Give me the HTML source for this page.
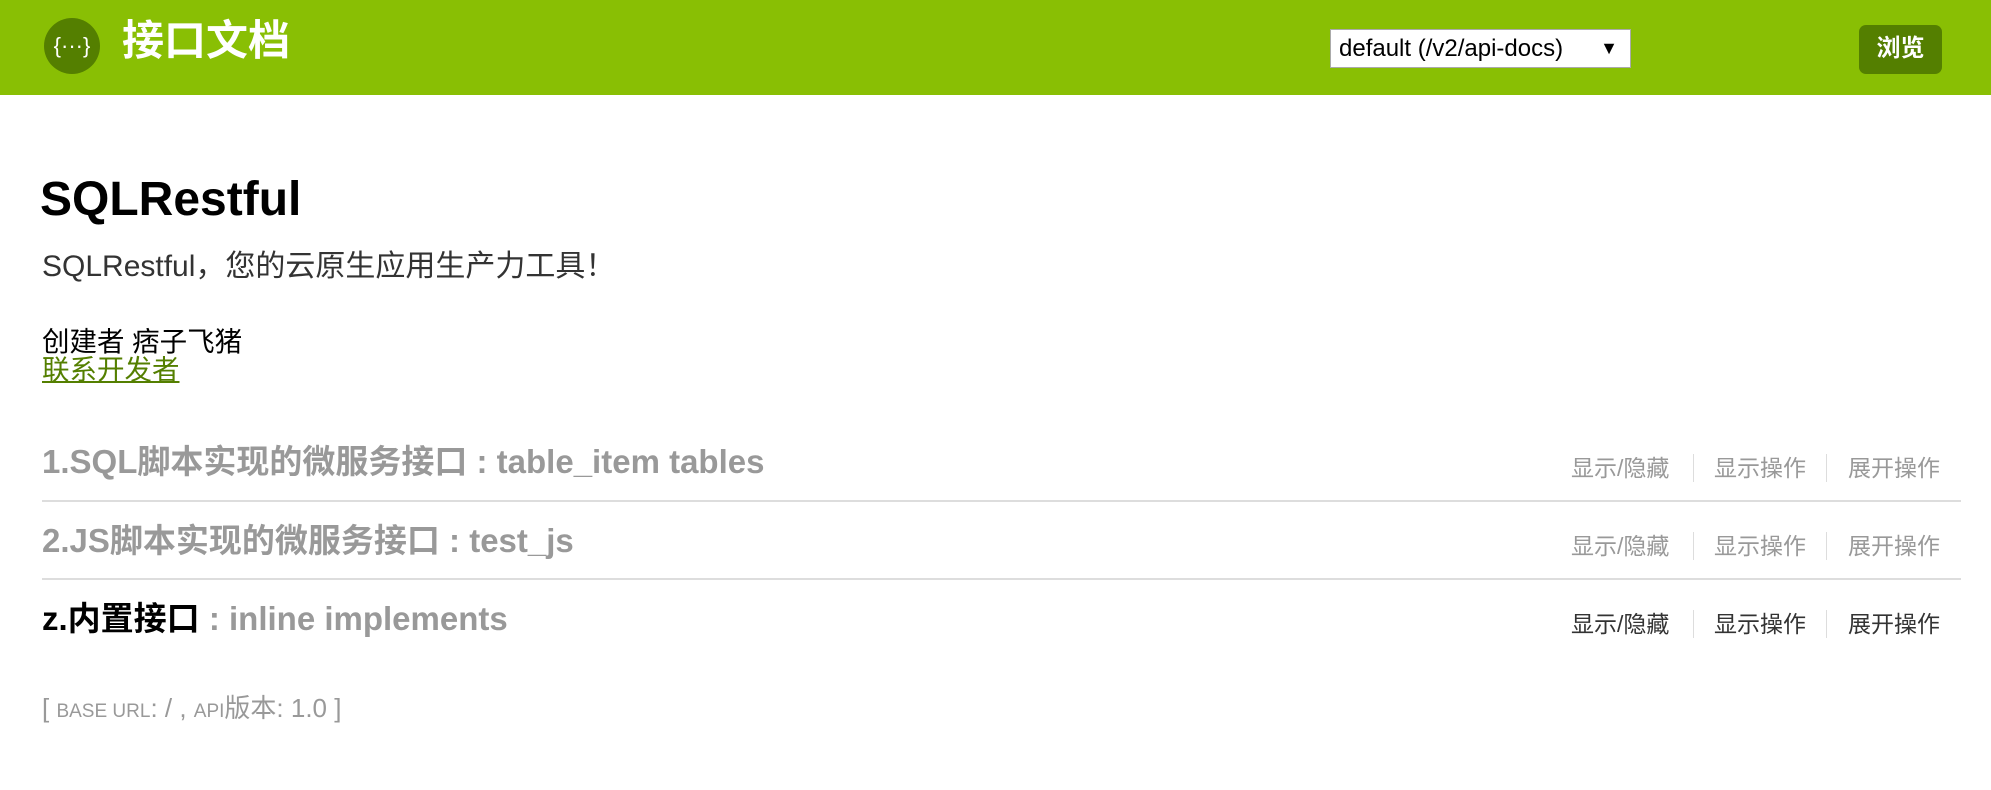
<!DOCTYPE html>
<html><head><meta charset="utf-8"><style>
*{margin:0;padding:0;box-sizing:border-box}
body{width:1991px;height:790px;background:#fff;position:relative;overflow:hidden;font-family:"Liberation Sans","Noto Sans CJK SC",sans-serif}
.a{position:absolute;white-space:nowrap;line-height:1}
#hd{position:absolute;left:0;top:0;width:1991px;height:95px;background:#89bf04}
.t{font-weight:bold;font-size:33px;color:#999}
.lk{font-size:23px;color:#999}
.sep{position:absolute;width:1px;height:28px;background:#ddd}
.hr{position:absolute;left:42px;width:1919px;height:2px;background:#ddd}
</style></head><body>
<div id="hd"></div>
<svg class="a" style="left:44px;top:18px" width="56" height="56" viewBox="0 0 56 56">
<circle cx="28" cy="28" r="28" fill="#547f00"/>
<text x="28" y="35" text-anchor="middle" font-family="Liberation Sans" font-size="22" fill="#fff">{···}</text>
</svg>
<div class="a" style="left:122px;top:20px;font-size:42px;font-weight:bold;color:#fff">接口文档</div>
<div class="a" style="left:1330px;top:29px;width:301px;height:39px;background:#fff;border:1px solid #aaa;font-size:24px;color:#000;padding:7px 0 0 8px">default (/v2/api-docs)<span style="position:absolute;right:12px;top:9px;font-size:18px">▼</span></div>
<div class="a" style="left:1859px;top:25px;width:83px;height:49px;background:#547f00;border-radius:7px;color:#fff;font-weight:bold;font-size:24px;text-align:center;padding-top:12px">浏览</div>

<div class="a" style="left:40px;top:176px;font-size:48px;font-weight:bold;color:#000">SQLRestful</div>
<div class="a" style="left:42px;top:252px;font-size:30px;color:#333">SQLRestful，您的云原生应用生产力工具！</div>
<div class="a" style="left:42px;top:328px;font-size:27.5px;color:#000">创建者 痞子飞猪</div>
<div class="a" style="left:42px;top:356px;font-size:27.5px;color:#547f00;text-decoration:underline">联系开发者</div>

<div class="a t" style="left:42px;top:445px">1.SQL脚本实现的微服务接口 : table_item tables</div>
<div class="a lk" style="left:1571px;top:457px">显示/隐藏</div>
<div class="sep" style="left:1693px;top:454px"></div>
<div class="a lk" style="left:1714px;top:457px">显示操作</div>
<div class="sep" style="left:1826px;top:454px"></div>
<div class="a lk" style="left:1848px;top:457px">展开操作</div>
<div class="hr" style="top:500px"></div>

<div class="a t" style="left:42px;top:524px">2.JS脚本实现的微服务接口 : test_js</div>
<div class="a lk" style="left:1571px;top:535px">显示/隐藏</div>
<div class="sep" style="left:1693px;top:532px"></div>
<div class="a lk" style="left:1714px;top:535px">显示操作</div>
<div class="sep" style="left:1826px;top:532px"></div>
<div class="a lk" style="left:1848px;top:535px">展开操作</div>
<div class="hr" style="top:578px"></div>

<div class="a t" style="left:42px;top:602px"><span style="color:#000">z.内置接口</span> : inline implements</div>
<div class="a lk" style="left:1571px;top:613px;color:#333">显示/隐藏</div>
<div class="sep" style="left:1693px;top:610px"></div>
<div class="a lk" style="left:1714px;top:613px;color:#333">显示操作</div>
<div class="sep" style="left:1826px;top:610px"></div>
<div class="a lk" style="left:1848px;top:613px;color:#333">展开操作</div>

<div class="a" style="left:42px;top:695px;font-size:26px;color:#999">[ <span style="font-size:19px">BASE URL</span>: / , <span style="font-size:19px">API</span>版本: 1.0 ]</div>
</body></html>
